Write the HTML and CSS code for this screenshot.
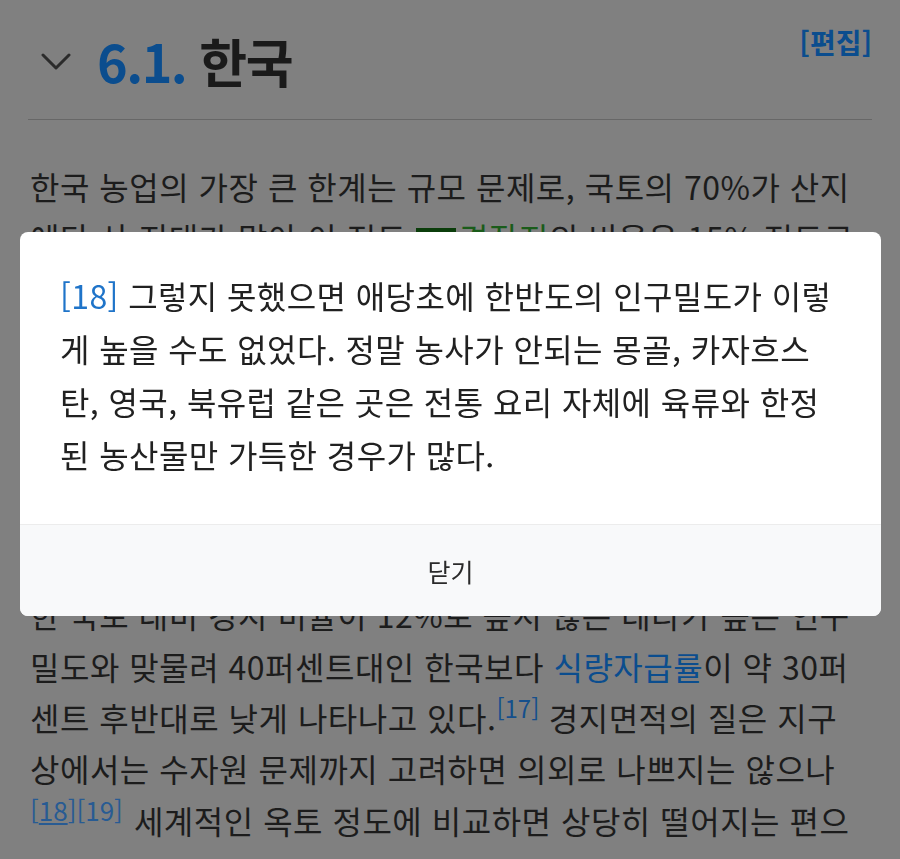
FILE: index.html
```html
<!DOCTYPE html>
<html lang="ko">
<head>
<meta charset="utf-8">
<title>6.1. 한국</title>
<link rel="stylesheet" href="styles.css">
</head>
<body>
<div class="page">
  <div class="head">
    <svg class="chev" width="30" height="18" viewBox="0 0 30 18" aria-hidden="true"><path d="M2 2 L15 15 L28 2" fill="none" stroke="#2b2b2b" stroke-width="3" stroke-linecap="round" stroke-linejoin="round"/></svg>
    <h2 class="title"><span class="num">6.1.</span> 한국</h2>
    <a class="edit">[편집]</a>
  </div>
  <p class="para">한국 농업의 가장 큰 한계는 규모 문제로, 국토의 70%가 산지<br>에다 산 지대가 많아 이 정도 <span class="flag"></span><span class="green">경작지</span>의 비율은 15% 정도로<br>좁고, 농가 1호당 경지면적이 1.5ha 정도에 불과하다. 이는<br>미국이나 유럽에 비하면 매우 작은 규모이며, 기계화와<br>규모의 경제를 달성하기 어려운 구조이다. 게다가<br>대부분의 농지가 논으로 되어 있어 쌀 생산에 치중되어<br>있으며, 밭작물의 자급률은 매우 낮은 편이다.<br>일본 역시 비슷한 문제를 안고 있는데, 산지가 많</p>
  <p class="para para2">한 국토 대비 경지 비율이 12%로 높지 않은 데다가 높은 인구<br>밀도와 맞물려 40퍼센트대인 한국보다 <a class="link">식량자급률</a>이 약 30퍼<br>센트 후반대로 낮게 나타나고 있다.<sup class="ref">[17]</sup> 경지면적의 질은 지구<br>상에서는 수자원 문제까지 고려하면 의외로 나쁘지는 않으나<br><sup class="ref ref2">[<u>18</u>][19]</sup>세계적인 옥토 정도에 비교하면 상당히 떨어지는 편으</p>
</div>
<div class="modal">
  <div class="modal-body"><span class="mref">[18]</span> 그렇지 못했으면 애당초에 한반도의 인구밀도가 이렇<br>게 높을 수도 없었다. 정말 농사가 안되는 몽골, 카자흐스<br>탄, 영국, 북유럽 같은 곳은 전통 요리 자체에 육류와 한정<br>된 농산물만 가득한 경우가 많다.</div>
  <div class="modal-foot">닫기</div>
</div>
</body>
</html>
```
FILE: styles.css
```css
html, body {
  margin: 0;
  padding: 0;
}
body {
  background: #808080;
  font-family: "Noto Sans CJK KR", "Noto Sans", sans-serif;
  color: #1c1c1c;
  width: 900px;
  height: 859px;
  overflow: hidden;
}
.page {
  padding: 0 28px 0 28px;
}
.head {
  display: flex;
  align-items: flex-start;
  height: 119px;
  border-bottom: 1px solid #676767;
}
.chev {
  margin: 53px 0 0 13px;
  flex: none;
}
.title {
  margin: 35px 0 0 26px;
  font-size: 52px;
  line-height: 52px;
  font-weight: 700;
  color: #1a1a1a;
  letter-spacing: -1.5px;
}
.num {
  color: #0b4d8e;
}
.edit {
  margin: 23px 0 0 auto;
  font-size: 28px;
  line-height: 38px;
  font-weight: 700;
  color: #0b4d8e;
}
.para {
  margin: 41px 0 0 2px;
  font-size: 32px;
  letter-spacing: 0.5px;
  line-height: 51.4px;
  white-space: nowrap;
  overflow: hidden;
}
.para2 {
  margin-top: 17px;
  overflow: visible;
}
.flag {
  display: inline-block;
  width: 40px;
  height: 26px;
  background: #0b3d0b;
  vertical-align: -3px;
  margin-right: 3px;
}
.green {
  color: #1a5c1a;
}
.link {
  color: #0b4d8e;
}
.ref {
  font-size: 24px;
  line-height: 0;
  letter-spacing: 0;
  color: #154f8c;
  vertical-align: 13px;
}
.ref2 {
  font-size: 26px;
  color: #285b93;
  margin-right: 11px;
}
.modal {
  position: fixed;
  left: 20px;
  top: 232px;
  width: 861px;
  height: 384px;
  background: #fff;
  border-radius: 8px;
  overflow: hidden;
  display: flex;
  flex-direction: column;
}
.modal-body {
  flex: 1;
  padding: 37px 40px 0 40px;
  font-size: 32px;
  letter-spacing: 0.4px;
  line-height: 53px;
  color: #212121;
  white-space: nowrap;
}
.mref {
  color: #1f74c9;
}
.modal-foot {
  height: 91px;
  border-top: 1px solid #ececec;
  background: #f8f9fa;
  display: flex;
  align-items: center;
  justify-content: center;
  font-size: 25px;
  color: #2a2a2a;
}
```
